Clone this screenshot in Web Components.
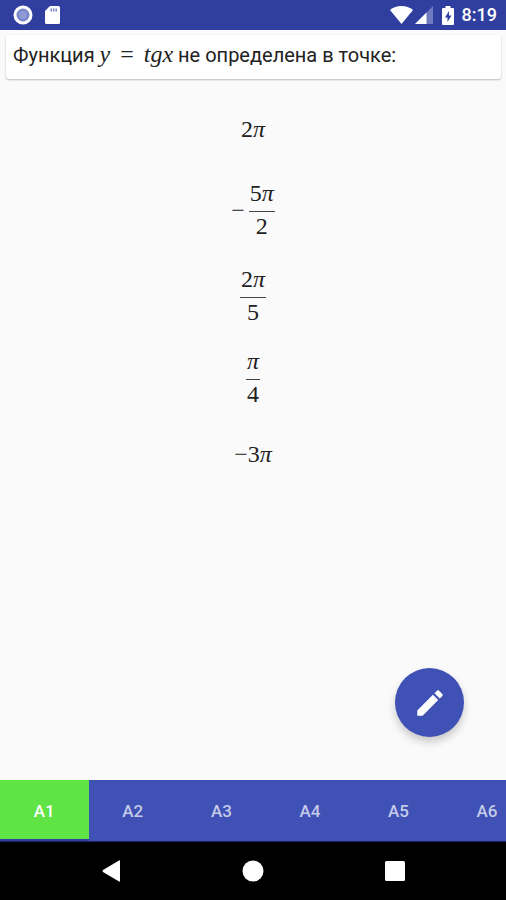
<!DOCTYPE html>
<html lang="ru">
<head>
<meta charset="utf-8">
<meta name="viewport" content="width=device-width, initial-scale=1">
<title>Тест</title>
<style>
  body {
    margin: 0;
    background: #fafafa;
    font-family: Roboto, 'Liberation Sans', sans-serif;
  }
</style>
</head>
<body>
<quiz-app></quiz-app>

<script>
/**
 * Status bar: notification icons on the left, system icons and clock on the right.
 */
class StatusBar extends HTMLElement {
  constructor() {
    super();
    this.attachShadow({ mode: 'open' });
  }

  connectedCallback() {
    this.shadowRoot.innerHTML = `
      <style>
        :host {
          display: flex;
          justify-content: space-between;
          align-items: center;
          height: 30px;
          padding: 0 9px 0 13px;
          background: #303f9f;
          color: #fff;
        }
        div { display: flex; align-items: center; }
        svg { display: block; }
        .sd { margin-left: 12px; }
        .signal { margin-left: 2px; }
        .battery { margin-left: 9px; }
        time {
          margin-left: 8px;
          font-size: 18px;
          font-weight: 500;
          line-height: 30px;
        }
      </style>
      <div>
        <svg width="20" height="20" viewBox="0 0 20 20" aria-hidden="true">
          <circle cx="10" cy="10" r="8" fill="#7986cb" stroke="#fff" stroke-width="3"/>
          <circle cx="10" cy="10" r="4" fill="#8e9ad6"/>
        </svg>
        <svg class="sd" width="15" height="18" viewBox="0 0 15 18" aria-hidden="true">
          <path d="M5 0h8.500q1.500 0 1.500 1.500v15q0 1.500-1.500 1.500h-12Q0 18 0 16.500V5z" fill="#fff"/>
          <path d="M5.500 2.500h1.500v3H5.500zM8 2.500h1.500v3H8zM10.500 2.500h1.500v3h-1.500z" fill="#7986cb"/>
        </svg>
      </div>
      <div>
        <svg width="23" height="18" viewBox="0 0 23 18" aria-hidden="true">
          <path d="M0 4Q5 0 11.500 0T23 4L11.500 18z" fill="#fff"/>
        </svg>
        <svg class="signal" width="18" height="18" viewBox="0 0 18 18" aria-hidden="true">
          <path d="M18 0v18H0z" fill="#6f7abf"/>
          <path d="M11.500 6.500V18H0z" fill="#fff"/>
        </svg>
        <svg class="battery" width="12" height="19" viewBox="0 0 12 19" aria-hidden="true">
          <path d="M3.500 0h5v2H11q1 0 1 1v15q0 1-1 1H1q-1 0-1-1V3q0-1 1-1h2.500z" fill="#fff"/>
          <path d="M7 5L3 11.500h2.500V16L9.500 9.500H7z" fill="#303f9f"/>
        </svg>
        <time>8:19</time>
      </div>
    `;
  }
}

/**
 * Math fraction.
 *
 * Slots: num, den.
 * Attributes:
 * - short: the numerator has no digits, so it takes less height.
 */
class MathFrac extends HTMLElement {
  constructor() {
    super();
    this.attachShadow({ mode: 'open' });
    this.shadowRoot.innerHTML = `
      <style>
        :host {
          display: inline-flex;
          flex-direction: column;
          text-align: center;
        }
        .num {
          padding: 4px 1px 10px;
          line-height: 15px;
          border-bottom: 1px solid #444;
        }
        :host([short]) .num { padding: 0 1px 10px; }
        .den {
          padding: 2px 1px 0;
          line-height: 24px;
        }
      </style>
      <div class="num"><slot name="num"></slot></div>
      <div class="den"><slot name="den"></slot></div>
    `;
  }
}

/**
 * Card with the question text.
 */
class QuestionCard extends HTMLElement {
  constructor() {
    super();
    this.attachShadow({ mode: 'open' });
    this.shadowRoot.innerHTML = `
      <style>
        :host {
          display: block;
          margin: 5px 5px 0 6px;
          padding: 6px 7px 10px;
          background: #fff;
          border-radius: 3px;
          box-shadow: 0 1px 2px rgba(0, 0, 0, 0.25);
          color: #222;
          font-size: 20px;
          line-height: 27px;
        }
        p { margin: 0; }
      </style>
      <p><slot></slot></p>
    `;
  }
}

class AnswerOption extends HTMLElement {
  constructor() {
    super();
    this.attachShadow({ mode: 'open' });
    this.shadowRoot.innerHTML = `
      <style>
        :host { display: block; }
        button {
          display: flex;
          justify-content: center;
          align-items: center;
          width: 100%;
          padding: 0;
          border: 0;
          background: none;
          color: #222;
          font-family: 'Liberation Serif', serif;
          font-size: 24px;
          line-height: 36px;
          cursor: pointer;
        }
        :host([plain]) button { padding-bottom: 5px; }
      </style>
      <button type="button"><slot></slot></button>
    `;
  }
}

/**
 * Tab strip with the question numbers.
 *
 * Attributes:
 * - tabs: comma separated labels.
 * - active: label of the current tab.
 */
class QuestionTabs extends HTMLElement {
  constructor() {
    super();
    this.attachShadow({ mode: 'open' });
  }

  static get observedAttributes() {
    return ['tabs', 'active'];
  }

  attributeChangedCallback() {
    this.render();
  }

  render() {
    const tabs = (this.getAttribute('tabs') || '').split(',');
    const active = this.getAttribute('active');

    this.shadowRoot.innerHTML = `
      <style>
        :host {
          display: block;
          background: #3f51b5;
          border-bottom: 1px solid #1d2663;
        }
        .strip {
          display: flex;
          overflow: hidden;
        }
        button {
          flex: 0 0 17.5%;
          padding: 4px 0 0;
          border: 0;
          border-bottom: 2px solid #3f51b5;
          background: none;
          color: #c5cae9;
          font-family: inherit;
          font-size: 17px;
          font-weight: 500;
          line-height: 55px;
          cursor: pointer;
        }
        button[aria-selected="true"] {
          background: #60e344;
          border-color: #303f9f;
          color: #fff;
        }
      </style>
      <div class="strip" role="tablist">
        ${tabs.map(tab => `
          <button type="button" role="tab" aria-selected="${tab === active}">${tab}</button>
        `).join('')}
      </div>
    `;

    this.shadowRoot.querySelectorAll('button').forEach(button => {
      button.addEventListener('click', () => {
        this.setAttribute('active', button.textContent);
      });
    });
  }
}

/**
 * System navigation: back, home, recent apps.
 */
class NavigationBar extends HTMLElement {
  constructor() {
    super();
    this.attachShadow({ mode: 'open' });
    this.shadowRoot.innerHTML = `
      <style>
        :host {
          display: flex;
          justify-content: center;
          height: 58px;
          background: #000;
        }
        button {
          flex: 0 0 28%;
          display: flex;
          justify-content: center;
          align-items: center;
          padding: 0;
          border: 0;
          background: none;
          cursor: pointer;
        }
        svg { display: block; fill: #fff; }
      </style>
      <button type="button" aria-label="Назад">
        <svg width="20" height="22" viewBox="0 0 20 22"><path d="M19 1v20q0 1-1 .5L2 12q-1-1 0-2L18 .5q1-.5 1 .5z"/></svg>
      </button>
      <button type="button" aria-label="Домой">
        <svg width="22" height="22" viewBox="0 0 22 22"><circle cx="11" cy="11" r="10.500"/></svg>
      </button>
      <button type="button" aria-label="Недавние">
        <svg width="20" height="20" viewBox="0 0 20 20"><rect width="20" height="20" rx="1.500"/></svg>
      </button>
    `;
  }
}

/**
 * Round floating button, the icon goes in the slot.
 */
class FloatingButton extends HTMLElement {
  constructor() {
    super();
    this.attachShadow({ mode: 'open' });
    this.shadowRoot.innerHTML = `
      <style>
        :host { display: block; }
        button {
          display: flex;
          justify-content: center;
          align-items: center;
          width: 69px;
          height: 69px;
          padding: 0;
          border: 0;
          border-radius: 50%;
          background: #3f51b5;
          box-shadow: 0 5px 9px rgba(0, 0, 0, 0.2);
          cursor: pointer;
        }
      </style>
      <button type="button" aria-label="Решение"><slot></slot></button>
    `;
  }
}

class QuizApp extends HTMLElement {
  constructor() {
    super();
    this.attachShadow({ mode: 'open' });
  }

  connectedCallback() {
    this.shadowRoot.innerHTML = `
      <style>
        :host {
          display: flex;
          flex-direction: column;
          min-height: 100vh;
        }
        main {
          position: relative;
          flex: 1;
        }
        .answers {
          display: flex;
          flex-direction: column;
          gap: 30px;
          padding: 32px 0;
        }
        .math {
          font-family: 'Liberation Serif', serif;
          font-size: 24px;
        }
        .rel { margin: 0 4px; }
        .minus { margin-right: 4px; }
        floating-button {
          position: absolute;
          right: 42px;
          bottom: 43px;
        }
      </style>
      <status-bar></status-bar>
      <main>
        <question-card>Функция <span class="math"><i>y</i><span class="rel"> = </span><i>tgx</i></span> не определена в точке:</question-card>
        <div class="answers">
          <answer-option plain><span>2<i>π</i></span></answer-option>
          <answer-option>
            <span class="minus">−</span>
            <math-frac><span slot="num">5<i>π</i></span><span slot="den">2</span></math-frac>
          </answer-option>
          <answer-option>
            <math-frac><span slot="num">2<i>π</i></span><span slot="den">5</span></math-frac>
          </answer-option>
          <answer-option>
            <math-frac short><i slot="num">π</i><span slot="den">4</span></math-frac>
          </answer-option>
          <answer-option plain><span>−3<i>π</i></span></answer-option>
        </div>
        <floating-button>
          <svg width="34" height="34" viewBox="0 0 24 24" fill="#fff" aria-hidden="true">
            <path d="M3 17.250V21h3.750L17.810 9.940l-3.750-3.750L3 17.250zM20.710 7.040c.39-.39.39-1.020 0-1.410l-2.340-2.340c-.39-.39-1.020-.39-1.410 0l-1.830 1.830 3.750 3.750 1.830-1.830z"/>
          </svg>
        </floating-button>
      </main>
      <question-tabs tabs="A1,A2,A3,A4,A5,A6" active="A1"></question-tabs>
      <navigation-bar></navigation-bar>
    `;
  }
}

customElements.define('status-bar', StatusBar);
customElements.define('math-frac', MathFrac);
customElements.define('question-card', QuestionCard);
customElements.define('answer-option', AnswerOption);
customElements.define('question-tabs', QuestionTabs);
customElements.define('navigation-bar', NavigationBar);
customElements.define('floating-button', FloatingButton);
customElements.define('quiz-app', QuizApp);
</script>
</body>
</html>
